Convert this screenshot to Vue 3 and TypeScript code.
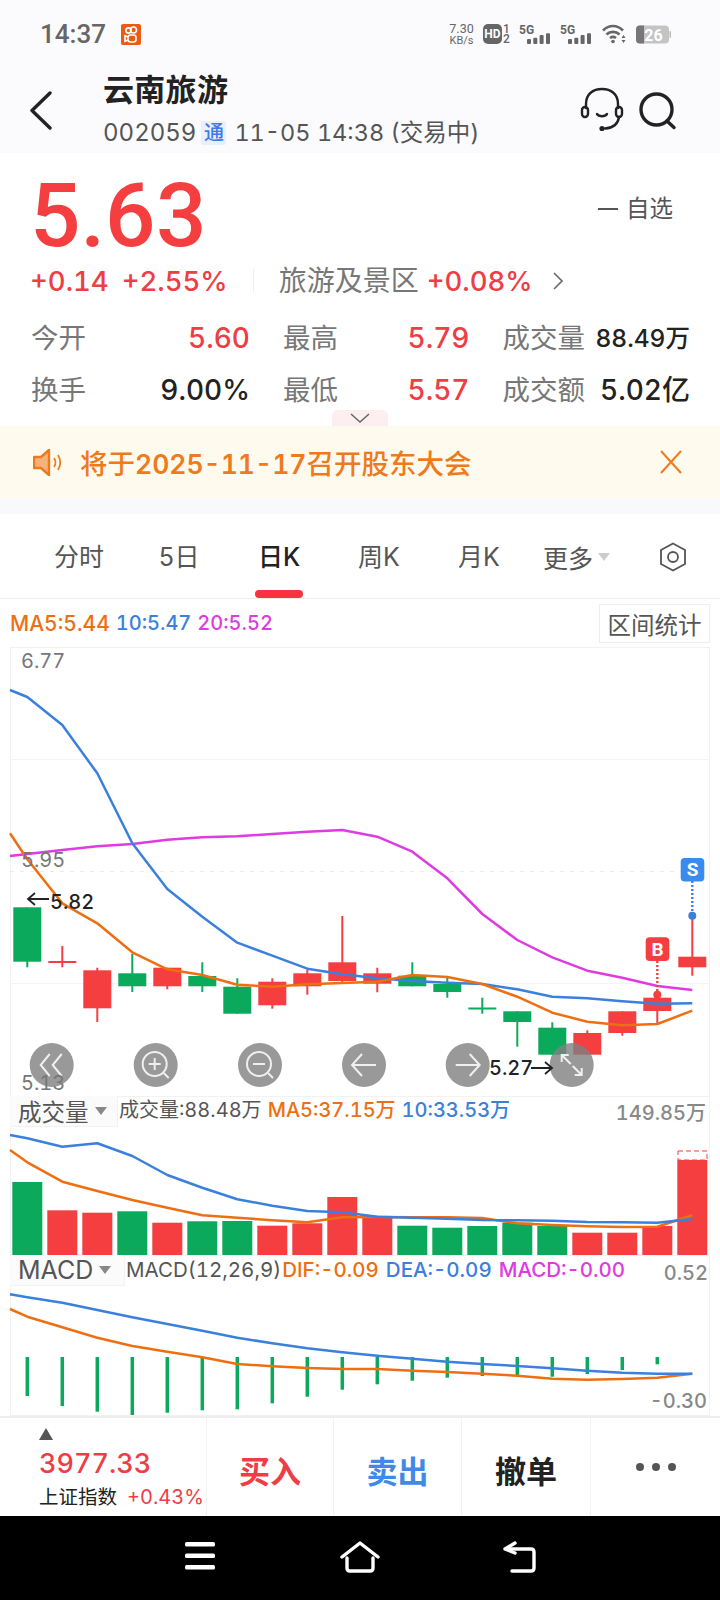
<script setup lang="ts">
const xs = (i: number) => 27.3 + 35 * i
const RED = '#f53e40'
const GREEN = '#0ba95b'
const ORANGE = '#ee6f12'
const BLUE = '#3a80dc'
const PINK = '#de3be0'

function toPts(first: [number, number], ys: number[], top: number): string {
  const p = [`${first[0]},${first[1] - top}`]
  ys.forEach((y, i) => p.push(`${xs(i)},${y - top}`))
  return p.join(' ')
}

const T1 = 647
const T2 = 1096
const T3 = 1255

const mainLines = [
  { c: PINK, pts: toPts([10, 856], [854, 850, 846.3, 844, 839.7, 837.3, 836.3, 834, 831.7, 830, 836.7, 851.7, 878.3, 914, 940, 957.3, 970.7, 977.7, 986, 990], T1) },
  { c: BLUE, pts: toPts([10, 690], [697, 725, 773.3, 843.3, 889, 916.7, 942.7, 955.7, 968.7, 974.3, 978.3, 981, 982.7, 984, 989.3, 996.7, 998.3, 1001.3, 1003.7, 1003.3], T1) },
  { c: ORANGE, pts: toPts([10, 833.3], [859.3, 903.3, 923.3, 952.3, 969.3, 975, 984.7, 986.7, 984.3, 983, 981.7, 975, 977, 984, 996.7, 1012.7, 1021.7, 1025.3, 1024, 1010.7], T1) },
]

const raw: [string, number, number, number, number][] = [
  ['g', 907.3, 961.7, 907.3, 967.3],
  ['r', 961, 963, 946, 967.3],
  ['r', 970.3, 1008.3, 967.7, 1022],
  ['g', 973.3, 986.3, 954, 992],
  ['r', 967.7, 986.3, 967.7, 989.3],
  ['g', 976, 986.3, 962.3, 992],
  ['g', 986.7, 1013.7, 978.3, 1013.7],
  ['r', 981.7, 1005.3, 978.3, 1008.7],
  ['r', 973.3, 986.3, 970, 994.7],
  ['r', 962.3, 981, 916, 983.3],
  ['r', 973.3, 983.7, 967.7, 992.3],
  ['g', 975.7, 986.3, 962.3, 986.3],
  ['g', 984, 992, 977.7, 997.7],
  ['g', 1007.5, 1009.5, 997.7, 1013.7],
  ['g', 1011.3, 1022, 1011.3, 1046.7],
  ['g', 1027.7, 1054.7, 1022.3, 1054.7],
  ['r', 1033, 1054.7, 1030.3, 1054.7],
  ['r', 1011.3, 1033, 1011.3, 1035.7],
  ['r', 997.7, 1011, 992.7, 1024],
  ['r', 956.7, 967.3, 915.7, 975.7],
]
const candles = raw.map((r, i) => ({
  x: xs(i),
  c: r[0] === 'r' ? RED : GREEN,
  y: r[1] - T1,
  h: r[2] - r[1],
  y1: r[3] - T1,
  y2: r[4] - T1,
}))

const volTops = [1182, 1210.3, 1212.7, 1211.3, 1222.7, 1221.3, 1221, 1225.7, 1223.3, 1197, 1216, 1225.7, 1227.7, 1226, 1222.7, 1226, 1232.7, 1232.7, 1226, 1160]
const volBars = volTops.map((t, i) => ({
  x: xs(i) - 15,
  y: t - T2,
  h: 1255 - t,
  c: raw[i][0] === 'r' ? RED : GREEN,
}))
const volLines = [
  { c: ORANGE, pts: toPts([10, 1150], [1162.3, 1181.7, 1191, 1200, 1207.7, 1215.3, 1217.7, 1220.3, 1222.3, 1217.3, 1217, 1217.3, 1217.3, 1218, 1223.3, 1225, 1226.3, 1227, 1226.7, 1215.3], T2) },
  { c: BLUE, pts: toPts([10, 1135], [1138.3, 1146.7, 1143.3, 1156, 1175, 1187.7, 1199.3, 1205.7, 1211, 1212.3, 1216.7, 1217.7, 1218.7, 1220, 1220.3, 1220.7, 1222, 1222.3, 1222.7, 1219], T2) },
]

const macdEnds = [1396, 1406, 1411.7, 1415, 1412.7, 1410.3, 1409.3, 1403.3, 1396.7, 1389.7, 1384.3, 1380.7, 1377.7, 1376, 1375, 1376.7, 1374, 1370, 1364.3]
const macdBars = macdEnds.map((e, i) => ({ x: xs(i) - 1.75, y: 1357 - T3, h: e - 1357 }))
const macdLines = [
  { c: ORANGE, pts: toPts([10, 1309], [1316.7, 1327.3, 1337.7, 1346, 1351.7, 1357.3, 1364, 1366.3, 1368, 1369, 1369, 1370.7, 1372, 1373.7, 1375.7, 1378.7, 1379.7, 1379, 1377.7, 1373.7], T3) },
  { c: BLUE, pts: toPts([10, 1294.3], [1297.3, 1302.7, 1310, 1317.3, 1324, 1330.7, 1337.7, 1343.3, 1348.3, 1352.3, 1355.7, 1358.7, 1361.7, 1364, 1366, 1368.3, 1370.7, 1372.7, 1373.7, 1373.7], T3) },
]

const stats = [
  { label: '今开', value: '5.60', cls: 'up' },
  { label: '最高', value: '5.79', cls: 'up' },
  { label: '成交量', value: '88.49万', cls: 'dark small' },
  { label: '换手', value: '9.00%', cls: 'dark' },
  { label: '最低', value: '5.57', cls: 'up' },
  { label: '成交额', value: '5.02亿', cls: 'dark' },
]
const tabs = ['分时', '5日', '日K', '周K', '月K']
const controls = [51.7, 155.7, 260, 364, 467.7, 571.7]
</script>

<template>
  <div class="page">
    <div class="status">
      <span class="time">14:37</span>
      <svg class="appicon" width="20" height="21" viewBox="0 0 20 21">
        <rect width="20" height="21" rx="2" fill="#ee5a14" />
        <g fill="none" stroke="#fff" stroke-width="1.6">
          <circle cx="7.500" cy="6.500" r="2.600" />
          <circle cx="12.500" cy="6" r="3" />
          <rect x="7" y="11" width="8" height="7" rx="2.500" />
          <path d="M7 13 L4 11.800 V17.200 L7 16" />
        </g>
      </svg>
      <div class="status-right">
        <div class="speed"><span class="s1">7.30</span><span class="s2">KB/s</span></div>
        <div class="hd">
          <span class="hd-b">HD</span>
          <span class="hd-n"><span>1</span><span>2</span></span>
        </div>
        <svg v-for="n in 2" :key="n" class="sig" width="32" height="22" viewBox="0 0 32 22">
          <text x="0" y="11" class="sig-t">5G</text>
          <rect x="8" y="16" width="4" height="5" rx="1" fill="#666" />
          <rect x="14.300" y="14.700" width="4" height="6.300" rx="1" fill="#666" />
          <rect x="20.600" y="12" width="4" height="9" rx="1" fill="#666" />
          <rect x="27" y="10.300" width="4" height="10.700" rx="1" fill="#666" />
        </svg>
        <svg class="wifi" width="24" height="20" viewBox="0 0 24 20" fill="none" stroke="#666" stroke-width="2.600">
          <path d="M1 6.500 C7 0.500 15 0.500 21 6.500" />
          <path d="M4.500 10.500 C8 7 14 7 17.500 10.500" />
          <path d="M8 14 C10 12.600 12 12.600 14 14" />
          <circle cx="11" cy="17.500" r="1.800" fill="#666" stroke="none" />
          <path d="M21.500 11 L23.500 14 H19.500 Z M21.500 19 L23.500 16 H19.500 Z" fill="#666" stroke="none" />
        </svg>
        <svg class="bat" width="35" height="19" viewBox="0 0 35 19">
          <rect width="33" height="18" y="0.500" rx="4" fill="#c4c4c4" />
          <path d="M4 0.500 H8 V18.500 H4 A4 4 0 0 1 0 14.500 V4.500 A4 4 0 0 1 4 0.500 Z" fill="#777" />
          <rect x="33.500" y="6" width="1.500" height="7" rx="0.700" fill="#bbb" />
          <text x="17.500" y="16" text-anchor="middle" class="bat-t">26</text>
        </svg>
      </div>
    </div>

    <header class="head">
      <svg class="back" width="26" height="40" viewBox="0 0 26 40" fill="none" stroke="#222" stroke-width="3.400" stroke-linecap="round" stroke-linejoin="round">
        <polyline points="22,2 4,19.500 22,37" />
      </svg>
      <div class="title">
        <div class="name">云南旅游</div>
        <div class="sub">
          <span>002059</span><span class="tong">通</span><span class="when">11-05 14:38 (交易中)</span>
        </div>
      </div>
      <svg class="headset" width="44" height="46" viewBox="0 0 44 46" fill="none" stroke="#222" stroke-width="2.400" stroke-linecap="round">
        <path d="M6 21 V17 C6 7 13 2 22 2 C31 2 38 7 38 17 V21" />
        <rect x="2" y="20" width="6" height="10" rx="3" />
        <rect x="36" y="20" width="6" height="10" rx="3" />
        <path d="M17 27 C19 30 25 30 27 27" />
        <path d="M39 30 C38 37 33 41 25 41.500" />
        <circle cx="22" cy="41.500" r="2.600" fill="#222" stroke="none" />
      </svg>
      <svg class="search" width="38" height="38" viewBox="0 0 38 38" fill="none" stroke="#222" stroke-width="3.400" stroke-linecap="round">
        <circle cx="17.500" cy="17.500" r="15.500" />
        <line x1="28" y1="29" x2="35" y2="35.500" />
      </svg>
    </header>

    <section class="quote">
      <div class="price-row">
        <span class="price">5.63</span>
        <span class="fav"><i class="dash"></i>自选</span>
      </div>
      <div class="change">
        <span class="up">+0.14</span>
        <span class="up gap1">+2.55%</span>
        <i class="vline"></i>
        <span class="sector">旅游及景区</span>
        <span class="up gap2">+0.08%</span>
        <svg class="chev" width="12" height="18" viewBox="0 0 12 18" fill="none" stroke="#666" stroke-width="1.600">
          <polyline points="2,1 10,9 2,17" />
        </svg>
      </div>
      <div class="stats">
        <div v-for="s in stats" :key="s.label" class="stat">
          <span class="lab">{{ s.label }}</span>
          <span class="val" :class="s.cls">{{ s.value }}</span>
        </div>
      </div>
      <div class="collapse">
        <svg width="20" height="10" viewBox="0 0 20 10" fill="none" stroke="#666" stroke-width="1.500">
          <polyline points="1,1 10,9 19,1" />
        </svg>
      </div>
    </section>

    <div class="notice">
      <svg class="speaker" width="30" height="27" viewBox="0 0 30 27">
        <path d="M1 8 H8 L16 1 V26 L8 19 H1 Z" fill="#f5b27a" stroke="#ee7a1e" stroke-width="2.400" stroke-linejoin="round" />
        <path d="M21 9 C23 12 23 15 21 18" fill="none" stroke="#ee7a1e" stroke-width="1.800" />
        <path d="M25 6 C28 11 28 16 25 21" fill="none" stroke="#ee7a1e" stroke-width="1.800" />
      </svg>
      <span class="notice-t">将于<span class="notice-d">2025-11-17</span>召开股东大会</span>
      <svg class="close" width="22" height="24" viewBox="0 0 22 24" stroke="#ee7a1e" stroke-width="2">
        <line x1="1" y1="1" x2="21" y2="23" />
        <line x1="21" y1="1" x2="1" y2="23" />
      </svg>
    </div>

    <div class="band"></div>

    <nav class="tabs">
      <div v-for="t in tabs" :key="t" class="tab" :class="{ on: t === '日K' }">{{ t }}</div>
      <div class="more">更多<i class="tri"></i></div>
      <svg class="hex" width="28" height="30" viewBox="0 0 28 30" fill="none" stroke="#555" stroke-width="1.800">
        <path d="M14 1.500 L26 8 V22 L14 28.500 L2 22 V8 Z" />
        <circle cx="14" cy="15" r="5" />
      </svg>
    </nav>

    <section class="chart">
      <div class="legend">
        <span class="orange ma5">MA5:5.44</span>
        <span class="blue">10:5.47</span>
        <span class="pink">20:5.52</span>
        <span class="range">区间统计</span>
      </div>

      <div class="pane">
        <svg class="pane-svg" width="720" height="449" viewBox="0 0 720 449">
          <rect x="10.500" y="0.500" width="699" height="449" fill="none" stroke="#f2f2f2" />
          <line x1="10" x2="710" y1="112.500" y2="112.500" stroke="#f4f4f4" />
          <line x1="10" x2="710" y1="224.500" y2="224.500" stroke="#ececec" stroke-dasharray="4 6" />
          <line x1="10" x2="710" y1="336.500" y2="336.500" stroke="#f4f4f4" />
          <g v-for="(c, i) in candles" :key="i">
            <line :x1="c.x" :x2="c.x" :y1="c.y1" :y2="c.y2" :stroke="c.c" stroke-width="2" />
            <rect :x="c.x - 14" :y="c.y" width="28" :height="c.h" :fill="c.c" />
          </g>
          <polyline v-for="l in mainLines" :key="l.c" :points="l.pts" :stroke="l.c" stroke-width="2.500" fill="none" stroke-linejoin="round" />

          <line x1="657.300" x2="657.300" y1="314" y2="345" :stroke="RED" stroke-width="2.400" stroke-dasharray="2 2" />
          <circle cx="657.300" cy="347.700" r="4" :fill="RED" />
          <rect x="645.700" y="290.300" width="23.600" height="23.600" rx="4" :fill="RED" />
          <text x="657.500" y="308.500" text-anchor="middle" class="mark">B</text>

          <line x1="692.300" x2="692.300" y1="234" y2="266" :stroke="BLUE" stroke-width="2.400" stroke-dasharray="2 2" />
          <circle cx="692.300" cy="268.700" r="4" :fill="BLUE" />
          <rect x="680.700" y="211" width="23.600" height="23.600" rx="4" fill="#3a8bf0" />
          <text x="692.500" y="229.200" text-anchor="middle" class="mark">S</text>

          <g v-for="(cx, i) in controls" :key="cx">
            <circle :cx="cx" cy="418" r="22" fill="#808080" fill-opacity="0.8" />
            <g fill="none" stroke="#fff" stroke-width="2" :transform="`translate(${cx} 418)`" opacity="0.85">
              <template v-if="i === 0">
                <polyline points="-2,-11 -11,0 -2,11" />
                <polyline points="10,-11 1,0 10,11" />
              </template>
              <template v-else-if="i === 1 || i === 2">
                <circle cx="-1" cy="-1" r="12" />
                <line x1="8" y1="8" x2="13" y2="13" />
                <line x1="-7" x2="5" y1="-1" y2="-1" />
                <line v-if="i === 1" x1="-1" x2="-1" y1="-7" y2="5" />
              </template>
              <template v-else-if="i === 3">
                <path d="M12 0 H-12 M-2 -11 L-12 0 L-2 11" />
              </template>
              <template v-else-if="i === 4">
                <path d="M-12 0 H12 M2 -11 L12 0 L2 11" />
              </template>
              <template v-else>
                <path d="M-10 -10 L-1 -1 M-10 -3 V-10 H-3" />
                <path d="M10 10 L1 1 M10 3 V10 H3" />
              </template>
            </g>
          </g>

          <text x="21" y="14" class="axis" dominant-baseline="central">6.77</text>
          <text x="21" y="213" class="axis" dominant-baseline="central">5.95</text>
          <text x="21" y="436" class="axis" dominant-baseline="central">5.13</text>

          <g fill="none" stroke="#222" stroke-width="1.800">
            <path d="M49 252 H28 M35 246 L28 252 L35 258" />
            <path d="M531 421 H552 M545 415 L552 421 L545 427" />
          </g>
          <text x="50" y="255" class="tag" dominant-baseline="central">5.82</text>
          <text x="489" y="421" class="tag" dominant-baseline="central">5.27</text>
        </svg>
      </div>

      <div class="pane">
        <svg class="pane-svg" width="720" height="159" viewBox="0 0 720 159">
          <rect x="10.500" y="0.500" width="699" height="159" fill="none" stroke="#f2f2f2" />
          <rect v-for="(b, i) in volBars" :key="i" :x="b.x" :y="b.y" width="30" :height="b.h" :fill="b.c" />
          <rect x="678" y="55" width="29" height="9" fill="none" :stroke="RED" stroke-dasharray="5 3" />
          <polyline v-for="l in volLines" :key="l.c" :points="l.pts" :stroke="l.c" stroke-width="2.500" fill="none" stroke-linejoin="round" />
          <text x="706" y="17" text-anchor="end" class="axis2" dominant-baseline="central">149.85万</text>
        </svg>
        <div class="pane-head">
          <div class="picker p-vol">成交量<i class="tri dark"></i></div>
          <span class="h-t gray first">成交量:88.48万</span>
          <span class="h-t orange">MA5:37.15万</span>
          <span class="h-t blue">10:33.53万</span>
        </div>
      </div>

      <div class="pane">
        <svg class="pane-svg" width="720" height="161" viewBox="0 0 720 161">
          <rect x="10.500" y="0.500" width="699" height="160" fill="none" stroke="#f2f2f2" />
          <rect v-for="(b, i) in macdBars" :key="i" :x="b.x" :y="b.y" width="3.500" :height="b.h" :fill="GREEN" />
          <polyline v-for="l in macdLines" :key="l.c" :points="l.pts" :stroke="l.c" stroke-width="2.500" fill="none" stroke-linejoin="round" />
          <text x="708" y="18" text-anchor="end" class="axis2" dominant-baseline="central">0.52</text>
          <text x="707" y="146" text-anchor="end" class="axis2" dominant-baseline="central">-0.30</text>
        </svg>
        <div class="pane-head head-macd">
          <div class="picker p-macd">MACD<i class="tri dark"></i></div>
          <span class="h-t gray first2">MACD(12,26,9)</span>
          <span class="h-t orange tight">DIF:-0.09</span>
          <span class="h-t blue">DEA:-0.09</span>
          <span class="h-t pink">MACD:-0.00</span>
        </div>
      </div>
    </section>

    <footer class="bar">
      <div class="index">
        <i class="up-tri"></i>
        <div class="idx-val">3977.33</div>
        <div class="idx-sub"><span class="idx-name">上证指数</span><span class="idx-pct">+0.43%</span></div>
      </div>
      <div class="act buy">买入</div>
      <div class="act sell">卖出</div>
      <div class="act cancel">撤单</div>
      <div class="act dots"><i></i><i></i><i></i></div>
    </footer>

    <div class="navbar">
      <svg width="32" height="30" viewBox="0 0 32 30" fill="#fff">
        <rect x="1" y="1" width="30" height="4.500" rx="1.500" />
        <rect x="1" y="12.500" width="30" height="4.500" rx="1.500" />
        <rect x="1" y="24" width="30" height="4.500" rx="1.500" />
      </svg>
      <svg width="40" height="32" viewBox="0 0 40 32" fill="none" stroke="#fff" stroke-width="3.400" stroke-linejoin="round" stroke-linecap="round">
        <path d="M2 16 L20 2 L38 16" />
        <path d="M7 17 V27 Q7 30 10 30 H30 Q33 30 33 27 V17" />
      </svg>
      <svg width="34" height="32" viewBox="0 0 34 32" fill="none" stroke="#fff" stroke-width="3.400" stroke-linejoin="round" stroke-linecap="round">
        <path d="M2 8 L12 2 M2 8 L12 12" />
        <path d="M3 8 H28 Q31 8 31 11 V27 Q31 30 28 30 H9" />
      </svg>
    </div>
  </div>
</template>

<style>
html, body { margin: 0; background: #fff; }
</style>

<style scoped>
.page {
  width: 720px;
  height: 1600px;
  overflow: hidden;
  background: #fff;
  font-family: Inter, "Noto Sans CJK SC", sans-serif;
  font-variant-numeric: tabular-nums;
  color: #222;
}
i { display: block; font-style: normal; }
svg { display: block; flex: none; }

.status {
  height: 54px;
  background: #fbfbfd;
  display: flex;
  align-items: center;
  padding: 14px 0 0 40px;
  box-sizing: border-box;
  font-family: Roboto, sans-serif;
}
.time { font-size: 26px; font-weight: 500; color: #666; width: 81px; line-height: 30px; }
.status-right { margin-left: auto; display: flex; align-items: center; padding-right: 49px; }
.speed { display: flex; flex-direction: column; align-items: center; width: 27px; color: #666; margin-right: 8px; }
.s1 { font-size: 12.500px; line-height: 12px; }
.s2 { font-size: 11px; line-height: 11px; }
.hd { display: flex; align-items: center; width: 28px; margin-right: 8px; }
.hd-b { width: 19px; height: 20px; border-radius: 5px; background: #666; color: #fff; font-size: 12px; font-weight: 700; line-height: 20px; text-align: center; }
.hd-n { display: flex; flex-direction: column; width: 9px; text-align: center; color: #666; font-size: 12px; font-weight: 500; line-height: 10px; }
.sig { margin-right: 9px; }
.sig-t { font: 700 12px Roboto, sans-serif; fill: #666; }
.wifi { margin: 0 10px 0 1px; }
.bat-t { font: 700 16px Roboto, sans-serif; fill: #fff; }

.head {
  height: 99px;
  background: #fbfbfd;
  display: flex;
  align-items: flex-start;
  position: relative;
}
.back { margin: 37px 0 0 28px; }
.title { margin-left: 49px; margin-top: 18px; }
.name { font-size: 31px; font-weight: 700; line-height: 36px; color: #222; letter-spacing: 0.300px; }
.sub { display: flex; align-items: center; margin-top: 11px; font-size: 24px; line-height: 28px; color: #555; white-space: nowrap; }
.when { font-size: 23.500px; }
.tong { width: 25px; height: 24px; margin: 0 8px 0 5px; background: #e9effc; color: #3f7be8; font-size: 20px; line-height: 24px; text-align: center; border-radius: 2px; font-weight: 500; }
.headset { margin: 33px 0 0 auto; }
.search { margin: 38px 43px 0 15px; }

.quote { height: 273px; padding: 0 31px; box-sizing: border-box; position: relative; }
.price-row { display: flex; justify-content: space-between; align-items: flex-start; height: 110px; }
.price { font-family: Roboto, sans-serif; font-size: 89px; font-weight: 500; color: #f53e40; line-height: 90px; margin: 17.500px 0 0 -1px; }
.fav { display: flex; align-items: center; font-size: 23.500px; color: #555; margin: 41px 16px 0 0; line-height: 30px; }
.dash { width: 20px; height: 2.500px; background: #555; margin-right: 8px; }
.change { display: flex; align-items: center; font-size: 27.500px; line-height: 36px; font-weight: 500; margin-left: -1px; }
.up { color: #ee3d45; }
.gap1 { margin-left: 13px; }
.vline { width: 1px; height: 24px; background: #eee; margin: 0 25px; }
.sector { color: #777; font-size: 28px; font-weight: 400; }
.gap2 { margin-left: 8px; }
.chev { margin-left: 19px; }
.stats {
  display: grid;
  grid-template-columns: 219px 186.500px 187.500px;
  column-gap: 33px;
  row-gap: 15px;
  margin-top: 21px;
}
.stat { display: flex; justify-content: space-between; align-items: center; line-height: 37px; }
.lab { font-size: 27.500px; color: #777; }
.val { font-size: 28px; font-weight: 500; }
.val.dark { color: #222; }
.val.small { font-size: 24.500px; font-weight: 500; }
.collapse {
  position: absolute;
  left: 332px;
  bottom: 0;
  width: 56px;
  height: 16px;
  background: #fdeef0;
  border-radius: 6px 6px 0 0;
  display: flex;
  justify-content: center;
  padding-top: 3px;
  box-sizing: border-box;
}

.notice {
  height: 72px;
  background: #fffaee;
  display: flex;
  align-items: center;
  padding: 0 38px 0 33px;
}
.notice-t { margin-left: 17px; font-size: 27.500px; font-weight: 500; color: #ee7a1e; }
.notice-d { font-size: 26.500px; font-weight: 600; }
.close { margin-left: auto; }
.band { height: 16px; background: #f8f9fb; }

.tabs {
  height: 85px;
  box-sizing: border-box;
  border-bottom: 1px solid #eee;
  display: flex;
  align-items: center;
  padding-left: 29px;
  padding-top: 2px;
}
.tab {
  width: 100px;
  height: 82px;
  line-height: 82px;
  text-align: center;
  font-size: 25px;
  color: #555;
  position: relative;
}
.tab.on { color: #222; font-weight: 500; }
.tab.on::after {
  content: "";
  position: absolute;
  left: 26px;
  bottom: 0;
  width: 48px;
  height: 8px;
  border-radius: 4px;
  background: #f8333f;
}
.more { display: flex; align-items: center; font-size: 25px; color: #555; margin-left: 14px; }
.tri { width: 0; height: 0; border-left: 6px solid transparent; border-right: 6px solid transparent; border-top: 8px solid #ccc; margin: 0 0 0 5px; }
.tri.dark { border-top-color: #888; margin-left: 6px; }
.hex { margin-left: 49px; }

.legend { height: 48px; position: relative; display: flex; align-items: center; gap: 6px; padding: 0 0 0 10px; font-size: 20px; font-weight: 500; white-space: nowrap; }
.ma5 { font-size: 21px; }
.orange { color: #ee6f12; }
.blue { color: #3a80dc; }
.pink { color: #de3be0; }
.gray { color: #555; font-weight: 400; }
.range {
  margin-left: auto;
  margin-right: 10px;
  width: 111px;
  height: 39px;
  margin-top: 1px;
  box-sizing: border-box;
  border: 1px solid #eee;
  color: #555;
  font-size: 23.500px;
  font-weight: 400;
  text-align: center;
  line-height: 41px;
}

.pane { position: relative; }
.pane-svg { display: block; }
.axis { font: 400 20px Inter, sans-serif; font-variant-numeric: tabular-nums; fill: #777; }
.axis2 { font: 500 20px Inter, "Noto Sans CJK SC", sans-serif; font-variant-numeric: tabular-nums; fill: #888; }
.tag { font: 500 20px Inter, sans-serif; font-variant-numeric: tabular-nums; fill: #222; }
.mark { font: 700 19px Roboto, sans-serif; fill: #fff; }

.pane-head {
  position: absolute;
  left: 10px;
  top: 0;
  display: flex;
  align-items: flex-start;
  font-size: 20px;
  font-weight: 500;
  white-space: nowrap;
}
.head-macd { font-size: 20.500px; }
.picker {
  display: flex;
  align-items: center;
  box-sizing: border-box;
  height: 31px;
  background: #fbfbfb;
  border: 1px solid #f2f2f2;
  border-width: 0 1px 1px 0;
  padding-left: 8px;
  font-size: 23.500px;
  font-weight: 400;
  color: #555;
}
.p-vol { width: 108px; }
.p-macd { width: 115px; font-size: 25px; }
.h-t { line-height: 28px; margin-left: 6px; }
.head-macd .h-t { line-height: 30px; margin-left: 7px; }
.first { margin-left: 1px; }
.head-macd .first2 { margin-left: 1px; }
.head-macd .tight { margin-left: 1px; }

.bar {
  height: 100px;
  box-sizing: border-box;
  border-top: 2px solid #eee;
  display: grid;
  grid-template-columns: 207px 127px 128px 129px 129px;
}
.index { padding: 10px 0 0 39px; box-sizing: border-box; border-right: 1px solid #f2f2f2; }
.up-tri { width: 0; height: 0; border-left: 7px solid transparent; border-right: 7px solid transparent; border-bottom: 12px solid #555; }
.idx-val { font-size: 27px; color: #ee3d45; font-weight: 500; line-height: 34px; margin-top: 7px; }
.idx-sub { display: flex; align-items: center; line-height: 28px; margin-top: 2px; white-space: nowrap; }
.idx-name { font-size: 19.500px; color: #222; }
.idx-pct { font-size: 20px; color: #ee3d45; margin-left: 10px; }
.act {
  display: flex;
  align-items: center;
  justify-content: center;
  font-size: 31px;
  font-weight: 700;
  border-right: 1px solid #f2f2f2;
  padding-top: 4px;
}
.buy { color: #ee3d45; }
.sell { color: #3f8ae8; }
.cancel { color: #222; }
.dots { border-right: 0; gap: 8px; padding-top: 0; }
.dots i { width: 8px; height: 8px; border-radius: 50%; background: #555; }

.navbar {
  height: 84px;
  background: #000;
  display: grid;
  grid-template-columns: repeat(3, 160px);
  justify-content: center;
  justify-items: center;
  align-items: start;
  padding-top: 25px;
  box-sizing: border-box;
}
</style>
